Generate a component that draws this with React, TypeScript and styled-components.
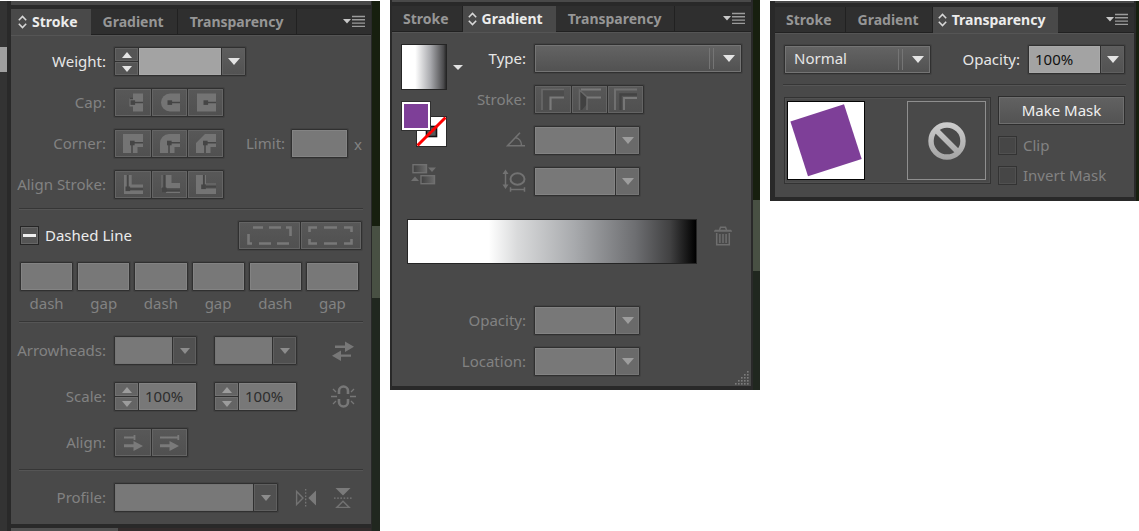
import React from "react";
import styled, { createGlobalStyle, css } from "styled-components";

const Global = createGlobalStyle`
  *, *::before, *::after { box-sizing: border-box; }
  body { margin: 0; background: #fff; font-family: "Noto Sans", "Open Sans", sans-serif; font-size: 15px; line-height: 18px; color: #e2e2e2; }
  button, input, select { font: inherit; color: inherit; margin: 0; padding: 0; border: 0; border-radius: 0; background: none; }
  svg { display: block; flex: none; }
`;

const DARK = "#292929";
const BODY = "#494949";
const EDGE = "#303030";
const MUTED = "#828282";

/* ---------- page and window frames ---------- */

const Page = styled.main`
  display: flex;
  align-items: flex-start;
  gap: 10px;
`;

const Frame = styled.section<{ $basis: number; $top: number }>`
  flex: 1 0 ${(p) => p.$basis}px;
  display: flex;
  margin-top: ${(p) => p.$top}px;
`;

const Rail = styled.div`
  flex: none;
  width: 7px;
  background: linear-gradient(#333 46px, #a0a0a0 46px 71px, #333 71px);
`;

const Shell = styled.div<{ $left: number; $right: number }>`
  flex: 1;
  display: flex;
  flex-direction: column;
  padding: 0 ${(p) => p.$right}px 0 ${(p) => p.$left}px;
  background: ${DARK};
`;

const Backdrop = styled.div<{ $width: number; $from: number; $to: number }>`
  flex: none;
  width: ${(p) => p.$width}px;
  background: linear-gradient(#171f0f ${(p) => p.$from}px, #485043 ${(p) => p.$from}px ${(p) => p.$to}px, #20271f ${(p) => p.$to}px);
`;

const DockEdge = styled.div<{ $height: number }>`
  height: ${(p) => p.$height}px;
  margin-bottom: 4px;
  background: ${BODY};
`;

const NextDock = styled.div`
  height: 3px;
  margin-top: 4px;
  background: linear-gradient(90deg, #505050 107px, #332c2c 107px);
`;

const TabBar = styled.div`
  display: flex;
  height: 26px;
  background: #2f2f2f;
`;

const TabButton = styled.button<{ $active: boolean }>`
  display: flex;
  align-items: center;
  gap: 5px;
  height: 26px;
  padding: 0 13px 0 12px;
  border-right: 1px solid #212121;
  border-bottom: 1px solid #212121;
  font-size: 14px;
  font-weight: 700;
  color: #969696;
  &:first-child { padding-left: 11px; }
  ${(p) =>
    p.$active &&
    css`
      padding: 0 12px 0 5px;
      &:first-child { padding-left: 7px; }
      background: ${BODY};
      border-color: ${BODY};
      color: #ececec;
    `}
`;

const TabRest = styled.div`
  flex: 1;
  display: flex;
  justify-content: flex-end;
  align-items: center;
  padding-right: 6px;
  border-bottom: 1px solid #212121;
`;

const MenuButton = styled.button`
  display: flex;
`;

const Body = styled.div<{ $bottom: number }>`
  padding: 12px 8px ${(p) => p.$bottom}px;
  background: ${BODY};
  box-shadow: inset 0 1px #555;
`;

/* ---------- generic parts ---------- */

const Stack = styled.div<{ $gap: number }>`
  display: flex;
  flex-direction: column;
  gap: ${(p) => p.$gap}px;
`;

const Row = styled.div<{ $label: number }>`
  display: grid;
  grid-template-columns: ${(p) => p.$label}px 1fr;
  column-gap: 8px;
  align-items: center;
  height: 29px;
`;

const Controls = styled.div`
  display: flex;
  align-items: center;
`;

const Caption = styled.label<{ $bright?: boolean }>`
  display: flex;
  justify-content: flex-end;
  padding-bottom: 2px;
  white-space: nowrap;
  color: ${(p) => (p.$bright ? "#e6e6e6" : MUTED)};
`;

const Rule = styled.hr<{ $above: number; $below: number }>`
  height: 2px;
  margin: ${(p) => p.$above}px 0 ${(p) => p.$below}px;
  border: 0;
  border-top: 1px solid #363636;
  background: #555;
`;

const Box = styled.div<{ $width?: number }>`
  display: flex;
  flex: ${(p) => (p.$width ? "none" : "1")};
  width: ${(p) => (p.$width ? `${p.$width}px` : "auto")};
  height: 29px;
  border: 1px solid ${EDGE};
  border-radius: 1px;
  box-shadow: 0 0 0 1px #424242;
`;

const Field = styled.input<{ $bright?: boolean }>`
  flex: 1;
  min-width: 0;
  width: 100%;
  padding: 0 0 1px 6px;
  background: ${(p) => (p.$bright ? "#a3a3a3" : "#787878")};
  color: ${(p) => (p.$bright ? "#111" : "#2d2d2d")};
  box-shadow: inset 0 0 0 1px ${(p) => (p.$bright ? "#a9a9a9" : "#838383")};
`;

const ArrowCell = styled.button<{ $tone: "bright" | "mid" | "dim" }>`
  display: flex;
  flex: none;
  align-items: center;
  justify-content: center;
  width: 24px;
  border-left: 1px solid ${EDGE};
  box-shadow: inset 0 0 0 1px ${(p) => (p.$tone === "mid" ? "#757575" : "#5f5f5f")};
  background: ${(p) =>
    p.$tone === "bright" ? "linear-gradient(#5e5e5e, #525252)" : p.$tone === "mid" ? "#6a6a6a" : "#505050"};
  color: ${(p) => (p.$tone === "bright" ? "#e4e4e4" : p.$tone === "mid" ? "#9d9d9d" : "#8c8c8c")};
`;

const SpinColumn = styled.div`
  display: flex;
  flex: none;
  flex-direction: column;
  width: 24px;
  border-right: 1px solid ${EDGE};
`;

const SpinButton = styled.button<{ $bright?: boolean }>`
  flex: 1;
  display: flex;
  align-items: center;
  justify-content: center;
  background: ${(p) => (p.$bright ? "#555" : "#646464")};
  color: ${(p) => (p.$bright ? "#e4e4e4" : "#9c9c9c")};
  box-shadow: inset 0 0 0 1px ${(p) => (p.$bright ? "#636363" : "#707070")};
  & + & { border-top: 1px solid ${EDGE}; }
`;

const SelectBox = styled(Box)<{ $flat?: boolean }>`
  display: grid;
  grid-template-columns: 1fr 24px;
  background: ${(p) => (p.$flat ? "#787878" : "linear-gradient(#646464, #515151)")};
`;

const SelectInput = styled.select`
  appearance: none;
  grid-area: 1 / 1 / 2 / 3;
  width: 100%;
  padding: 0 32px 3px 9px;
  color: #e6e6e6;
  box-shadow: inset 0 0 0 1px #747474;
`;

const SelectArrow = styled.span<{ $dim?: boolean }>`
  grid-area: 1 / 2;
  display: flex;
  align-items: center;
  justify-content: center;
  pointer-events: none;
  color: ${(p) => (p.$dim ? "#8c8c8c" : "#e4e4e4")};
  ${(p) =>
    p.$dim &&
    css`
      background: #505050;
      border-left: 1px solid ${EDGE};
      box-shadow: inset 0 0 0 1px #5f5f5f;
    `}
`;

const SelectGroove = styled.span`
  grid-area: 1 / 1;
  justify-self: end;
  align-self: center;
  width: 5px;
  height: 21px;
  margin-right: 3px;
  border: solid #757575;
  border-width: 0 1px;
  pointer-events: none;
`;

const ToolGroup = styled(Box)`
  width: max-content;
  flex: none;
`;

const ToolButton = styled.button<{ $wide?: boolean }>`
  display: flex;
  align-items: center;
  justify-content: center;
  width: ${(p) => (p.$wide ? 61 : 36)}px;
  background: linear-gradient(#585858, #505050);
  box-shadow: inset 0 0 0 1px #646464;
  & + & { border-left: 1px solid ${EDGE}; }
`;

const PlainButton = styled.button`
  display: flex;
  align-items: center;
  justify-content: center;
`;

/* ---------- stroke panel ---------- */

const StrokeBody = styled(Body)`
  label { flex: none; }
`;

const LimitGroup = styled.div`
  display: flex;
  align-items: center;
  gap: 6px;
  margin-left: 22px;
  color: ${MUTED};
`;

const DashHeader = styled.div`
  display: flex;
  align-items: center;
  justify-content: space-between;
  height: 29px;
  padding: 0 1px;
  margin-bottom: 12px;
`;

const CheckLabel = styled.label<{ $bright?: boolean }>`
  display: flex;
  align-items: center;
  gap: 6px;
  line-height: 17px;
  color: ${(p) => (p.$bright ? "#ececec" : MUTED)};
`;

const CheckInput = styled.input`
  appearance: none;
  width: 19px;
  height: 19px;
  border: 1px solid #333;
  background: #464646;
  box-shadow: inset 0 0 0 1px #505050;
  &.mixed {
    border-color: #262626;
    background: linear-gradient(#efefef, #efefef) center / 13px 3px no-repeat, #555;
    box-shadow: inset 0 0 0 1px #666;
  }
`;

const DashGrid = styled.div`
  display: grid;
  grid-template-columns: repeat(6, 1fr);
  gap: 4px;
  padding: 0 4px 0 1px;
`;

const DashCell = styled.label`
  display: flex;
  flex-direction: column;
  align-items: center;
  gap: 3px;
  color: ${MUTED};
`;

const DashBox = styled(Box)`
  flex: none;
  width: 100%;
`;

const PairSpace = styled.div`
  flex: none;
  width: 17px;
`;

const RowIcon = styled(PlainButton)`
  width: 26px;
  margin-left: auto;
  margin-right: 7px;
`;

const ProfileFlip = styled(PlainButton)`
  margin-left: 17px;
`;

/* ---------- gradient panel ---------- */

const GradientTop = styled.div`
  display: grid;
  grid-template-columns: 63px 1fr;
  padding-left: 1px;
  padding-right: 1px;
`;

const SwatchColumn = styled.div`
  display: flex;
  flex-direction: column;
`;

const PreviewRow = styled.div`
  display: flex;
  align-items: center;
  gap: 6px;
`;

const Preview = styled.div`
  width: 46px;
  height: 46px;
  border: 1px solid #252525;
  background: linear-gradient(90deg, #fff 30%, #a8a9ad 65%, #4c4c4e 94%, #2a2a2a);
`;

const Proxies = styled.div`
  position: relative;
  width: 46px;
  height: 46px;
  margin-top: 11px;
`;

const FillProxy = styled.button`
  position: absolute;
  top: 0;
  left: 0;
  width: 30px;
  height: 30px;
  border: 1px solid #303030;
  background: #7e3f98;
  box-shadow: inset 0 0 0 2px #fff;
`;

const StrokeProxy = styled.button`
  position: absolute;
  right: 0;
  bottom: 0;
`;

const ReverseButton = styled(PlainButton)`
  margin: 16px 0 0 10px;
  align-self: flex-start;
`;

const RampRow = styled.div`
  display: flex;
  align-items: flex-start;
  justify-content: space-between;
  gap: 17px;
  margin: 23px 11px 42px 7px;
`;

const Ramp = styled.div`
  flex: 1;
  height: 45px;
  border: 1px solid #252525;
  background: linear-gradient(90deg, #fff 28%, #d9dadb 38%, #a7a9ac 58%, #6d6e71 79%, #414142 91%, #000);
`;

const TrashButton = styled(PlainButton)`
  margin-top: 7px;
`;

const GripHolder = styled.div`
  display: flex;
  justify-content: flex-end;
  height: 10px;
  margin-right: -6px;
  overflow: visible;
  align-items: flex-end;
`;

/* ---------- transparency panel ---------- */

const BlendRow = styled.div`
  display: flex;
  align-items: center;
  justify-content: space-between;
  padding: 0 1px;
`;

const OpacityGroup = styled.div`
  display: flex;
  align-items: center;
  gap: 8px;
`;

const MaskRow = styled.div`
  display: flex;
  gap: 7px;
  padding: 0 1px;
`;

const MaskWell = styled.div`
  flex: 1;
  display: flex;
  justify-content: space-between;
  align-items: center;
  height: 87px;
  margin-top: 1px;
  padding: 0 4px 0 2px;
  border: 1px solid #333;
  box-shadow: inset 0 0 0 1px #515151;
`;

const Artwork = styled.div`
  border: 1px solid #050505;
  background: #fff;
`;

const EmptyMask = styled.div`
  display: flex;
  align-items: center;
  justify-content: center;
  width: 79px;
  height: 79px;
  border: 1px solid #8f8f8f;
`;

const MaskOptions = styled.div`
  display: flex;
  flex-direction: column;
  width: 127px;
  gap: 11px;
`;

const MakeMask = styled.button`
  height: 29px;
  padding-bottom: 1px;
  border: 1px solid #2d2d2d;
  background: linear-gradient(#626262, #525252);
  box-shadow: inset 0 0 0 1px #6e6e6e;
  color: #efefef;
`;

/* ---------- drawings ---------- */

const Down = ({ w = 12, h = 7 }: { w?: number; h?: number }) => (
  <svg width={w} height={h} viewBox="0 0 12 7" preserveAspectRatio="none" aria-hidden="true">
    <path d="M0 0H12L6 7Z" fill="currentColor" />
  </svg>
);

const Up = () => (
  <svg width="10" height="6" viewBox="0 0 10 6" aria-hidden="true">
    <path d="M0 6H10L5 0Z" fill="currentColor" />
  </svg>
);

const Cycle = () => (
  <svg width="9" height="14" viewBox="0 0 9 14" fill="none" stroke="#d8d8d8" strokeWidth="1.5" aria-hidden="true">
    <path d="M.8 5.3 4.5 1.4 8.2 5.3M.8 8.7l3.7 3.9 3.7-3.9" />
  </svg>
);

const MenuIcon = () => (
  <svg width="22" height="13" viewBox="0 0 22 13" aria-hidden="true">
    <path d="M0 4H8L4 8.5Z" fill="#c8c8c8" />
    <path d="M9 1.5H22M9 4.8H22M9 8.1H22M9 11.4H22" stroke="#9c9c9c" strokeWidth="1.4" />
  </svg>
);

const LIGHT = "#747474";
const INK = "#454545";
const DIM = "#727272";

const Glyph = ({ light, lines, node }: { light: string; lines: string; node: [number, number] }) => (
  <svg width="24" height="21" viewBox="0 0 24 21" aria-hidden="true">
    <path d={light} fill={LIGHT} />
    <path d={lines} stroke={INK} strokeWidth="1.5" fill="none" />
    <rect x={node[0]} y={node[1]} width="4.6" height="4.6" fill={INK} />
  </svg>
);

const CAPS = [
  { name: "Butt cap", light: "M12 1.5H22V19.5H12V14.5H8.5V6.5H12Z", lines: "M9 6.5H12M13 10.5H22", node: [9.5, 8.3] },
  { name: "Round cap", light: "M22 1.5V19.5H12A9 9 0 0 1 12 1.5Z", lines: "M12 10.5H22", node: [9.5, 8.3] },
  { name: "Projecting cap", light: "M3 1.5H22V19.5H3Z", lines: "M12 10.5H22", node: [9.5, 8.3] },
] as const;

const CORNERS = [
  { name: "Miter join", light: "M2 1H22V14H16.5V20H2Z", lines: "M11 9.7H22M11 9.7V20", node: [9, 7.7] },
  { name: "Round join", light: "M11 1H22V14H16.5V20H2V10A9 9 0 0 1 11 1Z", lines: "M11 9.7H22M11 9.7V20", node: [9, 7.7] },
  { name: "Bevel join", light: "M11 1H22V14H16.5V20H2V10Z", lines: "M11 9.7H22M11 9.7V20", node: [9, 7.7] },
] as const;

const ALIGNS = [
  {
    name: "Center",
    light: "M3 1H5.7V20H3ZM7.7 1H10.7V10.5H22V13.5H7.7ZM8 16.5H22V20H3V16.5Z",
    lines: "M6.7 1V14M8 15H22",
    node: [4.5, 12.5],
  },
  {
    name: "Inside",
    light: "M8 1H13.5V9H22V14H8ZM3.5 1H4.5V14H3.5ZM8 18H22V19H8Z",
    lines: "M6.3 1V15M8 16.3H22",
    node: [4, 13.5],
  },
  {
    name: "Outside",
    light: "M2 1H9V14.5H22V20H2ZM11 1H12V9.5H22V10.5H11Z",
    lines: "M9.7 1V11M12 12.8H22",
    node: [7.2, 10.5],
  },
] as const;

type GlyphSpec = { name: string; light: string; lines: string; node: readonly [number, number] };

const GlyphGroup = ({ items, label }: { items: readonly GlyphSpec[]; label: string }) => (
  <ToolGroup role="group" aria-label={label}>
    {items.map((g) => (
      <ToolButton key={g.name} type="button" aria-label={g.name}>
        <Glyph light={g.light} lines={g.lines} node={[g.node[0], g.node[1]]} />
      </ToolButton>
    ))}
  </ToolGroup>
);

const DashIcon = ({ aligned }: { aligned?: boolean }) => (
  <svg width="46" height="21" viewBox="0 0 46 21" fill="none" stroke="#787878" strokeWidth="2.6" aria-hidden="true">
    {aligned ? (
      <path d="M1.5 7V2.5H9M16 2.5H29M36 2.5H43.5V7M1.5 14V18.5H9M16 18.5H29M36 18.5H43.5V14" />
    ) : (
      <path d="M1.5 17V9M6 2.5H16M22 2.5H34M39 2.5H43.5V11M1.5 14V18.5H5M12 18.5H24M30 18.5H42" />
    )}
  </svg>
);

const SwapIcon = () => (
  <svg width="22" height="20" viewBox="0 0 22 20" fill="#777" aria-hidden="true">
    <path d="M3 4.6H13V.5L22 5.8 13 11V7H3ZM19 13.4H9V9.5L0 14.8 9 20V15.8H19Z" />
  </svg>
);

const LinkIcon = () => (
  <svg width="25" height="23" viewBox="0 0 25 23" fill="none" stroke="#777" aria-hidden="true">
    <path d="M8 9V6A4.5 4.5 0 0 1 17 6V9M8 14V17A4.5 4.5 0 0 0 17 17V14" strokeWidth="2.6" />
    <path d="M0 11.5H6M19 11.5H25M2 4 5 7M23 4 20 7M2 19 5 16M23 19 20 16" strokeWidth="1.3" />
  </svg>
);

const TipIcon = ({ beyond }: { beyond?: boolean }) => (
  <svg width="21" height="17" viewBox="0 0 21 17" aria-hidden="true">
    <path d={beyond ? "M1 3.5H20M19.3 1V6" : "M1 3.5H12M11.5 1V6"} stroke="#7a7a7a" strokeWidth="1.8" />
    <path d="M1 10.3H10.5V7L20 12 10.5 17V13.3H1Z" fill="#7a7a7a" />
  </svg>
);

const FlipAlong = () => (
  <svg width="22" height="18" viewBox="0 0 22 18" aria-hidden="true">
    <path d="M1.6 2.5V15.5L8 9Z" fill="none" stroke={DIM} strokeWidth="1.4" />
    <path d="M21 1.5V16.5L13.3 9Z" fill="#7a7a7a" />
    <path d="M10.7 0V18" stroke="#7a7a7a" strokeWidth="1.2" strokeDasharray="1.6 1.6" />
  </svg>
);

const FlipAcross = () => (
  <svg width="18" height="22" viewBox="0 0 18 22" aria-hidden="true">
    <path d="M1.5 1H16.5L9 8.5Z" fill="#7a7a7a" />
    <path d="M2.8 20.4H15.2L9 14.2Z" fill="none" stroke={DIM} strokeWidth="1.4" />
    <path d="M0 11.2H18" stroke="#7a7a7a" strokeWidth="1.2" strokeDasharray="1.6 1.6" />
  </svg>
);

const NoneIcon = () => (
  <svg width="31" height="31" viewBox="0 0 31 31" aria-hidden="true">
    <rect x=".5" y=".5" width="30" height="30" fill="#fff" stroke="#2a2a2a" />
    <rect x="10.5" y="10.5" width="10" height="10" fill="#565656" stroke="#111" strokeWidth="1.6" />
    <path d="M1.5 29.5 29.5 1.5" stroke="#f00" strokeWidth="3" />
  </svg>
);

const STROKE_GRADIENTS = ["Within stroke", "Along stroke", "Across stroke"];

const StrokeGradientIcon = ({ index }: { index: number }) => (
  <svg width="26" height="23" viewBox="0 0 26 23" fill="none" aria-hidden="true">
    {index === 0 && (
      <>
        <path d="M2 22V1.5H24V9H10V22Z" fill="#4d4d4d" />
        <path d="M2 22V1.5H24" stroke="#696969" strokeWidth="1.6" />
        <path d="M10.5 22V9.5H24" stroke="#7a7a7a" strokeWidth="2.2" />
      </>
    )}
    {index === 1 && (
      <>
        <path d="M3 2 10 9V16L5 22H3Z" fill="#414141" />
        <path d="M2.5 22V2L10 9V22" stroke="#696969" strokeWidth="1.6" />
        <path d="M4 1.5H24M10 9.5H24" stroke="#7a7a7a" strokeWidth="2" />
      </>
    )}
    {index === 2 && (
      <>
        <path d="M7.5 22V6.5H24" stroke="#434343" strokeWidth="2.4" />
        <path d="M2 22V1.5H24" stroke="#707070" strokeWidth="2" />
        <path d="M11 22V10H24" stroke="#7a7a7a" strokeWidth="1.8" />
      </>
    )}
  </svg>
);

const ReverseIcon = () => (
  <svg width="26" height="22" viewBox="0 0 26 22" aria-hidden="true">
    <defs>
      <linearGradient id="fadeOut">
        <stop stopColor="#404040" />
        <stop offset="1" stopColor="#6c6c6c" />
      </linearGradient>
    </defs>
    <g fill="url(#fadeOut)" stroke="#707070" strokeWidth="1.4">
      <rect x="2" y="1.7" width="13.5" height="8" />
      <rect x="10" y="12.7" width="13.5" height="8" />
    </g>
    <path d="M17 4.5H25L21 9ZM0 18H8L4 13.5Z" fill="#707070" />
  </svg>
);

const AngleIcon = () => (
  <svg width="20" height="15" viewBox="0 0 20 15" fill="none" stroke={DIM} strokeWidth="1.6" aria-hidden="true">
    <path d="M14 .8 1.6 13.8H19M9 5.5C13 6 15.5 9.5 15.5 13.5" />
  </svg>
);

const AspectIcon = () => (
  <svg width="24" height="23" viewBox="0 0 24 23" fill="none" stroke={DIM} aria-hidden="true">
    <ellipse cx="15.5" cy="10" rx="7" ry="5.7" strokeWidth="2" />
    <path d="M3.5 3V17M8 20.5H23M8.5 18.2V22.8M22.5 18.2V22.8" strokeWidth="1.5" />
    <path d="M.5 5 3.5 .5 6.5 5ZM.5 15.5 3.5 20 6.5 15.5Z" fill={DIM} stroke="none" />
  </svg>
);

const TrashIcon = () => (
  <svg width="18" height="20" viewBox="0 0 18 20" fill="none" stroke="#6e6e6e" strokeWidth="1.5" aria-hidden="true">
    <path d="M5.5 4 6.5 1.2H11.5L12.5 4" />
    <path d="M0 5.5H18L17 4H1Z" fill="#6e6e6e" strokeWidth=".5" />
    <path d="M2.7 7V18.8H15.3V7M5.9 8V17M9 8V17M12.1 8V17" />
  </svg>
);

const GripIcon = () => (
  <svg width="16" height="17" viewBox="0 0 16 17" aria-hidden="true">
    {[0, 1, 2, 3, 4].flatMap((r) =>
      Array.from({ length: r + 1 }, (_, c) => (
        <rect key={`${r}-${c}`} x={14 - c * 3} y={2 + r * 3} width="1.6" height="1.6" fill="#7c7c7c" />
      ))
    )}
  </svg>
);

const ArtworkIcon = () => (
  <svg width="76" height="77" viewBox="0 0 76 77" role="img" aria-label="Artwork thumbnail">
    <path d="M2.4 19.6 56 2.3 73.7 56.9 20 74.3Z" fill="#7e3f98" />
  </svg>
);

const ForbidIcon = () => (
  <svg width="40" height="40" viewBox="0 0 40 40" fill="none" stroke="url(#steel)" strokeWidth="5.4" aria-hidden="true">
    <defs>
      <linearGradient id="steel" x1="0" y1="0" x2="0" y2="40" gradientUnits="userSpaceOnUse">
        <stop stopColor="#cfcfcf" />
        <stop offset="1" stopColor="#a2a2a2" />
      </linearGradient>
    </defs>
    <circle cx="20" cy="20" r="16" />
    <path d="M9 9 31 31" />
  </svg>
);

/* ---------- composed controls ---------- */

const TABS = ["Stroke", "Gradient", "Transparency"];

const Tabs = ({ active }: { active: string }) => (
  <TabBar role="tablist">
    {TABS.map((t) => (
      <TabButton key={t} type="button" role="tab" aria-selected={t === active} $active={t === active}>
        {t === active && <Cycle />}
        {t}
      </TabButton>
    ))}
    <TabRest>
      <MenuButton type="button" aria-label="Panel menu">
        <MenuIcon />
      </MenuButton>
    </TabRest>
  </TabBar>
);

const Combo = ({ id, width, tone = "mid", value }: { id: string; width: number; tone?: "bright" | "mid"; value?: string }) => (
  <Box $width={width}>
    <Field id={id} $bright={tone === "bright"} defaultValue={value} />
    <ArrowCell type="button" $tone={tone} aria-label="Show values">
      <Down />
    </ArrowCell>
  </Box>
);

const Spinner = ({ bright }: { bright?: boolean }) => (
  <SpinColumn>
    <SpinButton type="button" $bright={bright} aria-label="Increase">
      <Up />
    </SpinButton>
    <SpinButton type="button" $bright={bright} aria-label="Decrease">
      <Down w={10} h={6} />
    </SpinButton>
  </SpinColumn>
);

const FlatSelect = ({ id, label, width }: { id: string; label?: string; width: number }) => (
  <SelectBox $width={width} $flat>
    <SelectInput id={id} aria-label={label}>
      <option />
    </SelectInput>
    <SelectArrow $dim>
      <Down w={10} h={6} />
    </SelectArrow>
  </SelectBox>
);

const StrokePanel = () => (
  <Frame $basis={380} $top={1} aria-label="Stroke panel">
    <Rail />
    <Shell $left={4} $right={1}>
      <DockEdge $height={4} />
      <Tabs active="Stroke" />
      <StrokeBody $bottom={12}>
        <Stack $gap={12}>
          <Row $label={87}>
            <Caption $bright htmlFor="weight">Weight:</Caption>
            <Controls>
              <Box $width={132}>
                <Spinner bright />
                <Field id="weight" $bright />
                <ArrowCell type="button" $tone="bright" aria-label="Weight presets">
                  <Down />
                </ArrowCell>
              </Box>
            </Controls>
          </Row>
          <Row $label={87}>
            <Caption as="span">Cap:</Caption>
            <GlyphGroup items={CAPS} label="Cap" />
          </Row>
          <Row $label={87}>
            <Caption as="span">Corner:</Caption>
            <Controls>
              <GlyphGroup items={CORNERS} label="Corner" />
              <LimitGroup>
                <Caption htmlFor="limit">Limit:</Caption>
                <Box $width={57}>
                  <Field id="limit" />
                </Box>
                <span>x</span>
              </LimitGroup>
            </Controls>
          </Row>
          <Row $label={87}>
            <Caption as="span">Align Stroke:</Caption>
            <GlyphGroup items={ALIGNS} label="Align stroke" />
          </Row>
        </Stack>
        <Rule $above={9} $below={11} />
        <DashHeader>
          <CheckLabel $bright>
            <CheckInput type="checkbox" className="mixed" />
            Dashed Line
          </CheckLabel>
          <ToolGroup role="group" aria-label="Dash alignment">
            <ToolButton $wide type="button" aria-label="Preserve exact dash lengths">
              <DashIcon />
            </ToolButton>
            <ToolButton $wide type="button" aria-label="Align dashes to corners">
              <DashIcon aligned />
            </ToolButton>
          </ToolGroup>
        </DashHeader>
        <DashGrid>
          {["dash", "gap", "dash", "gap", "dash", "gap"].map((t, i) => (
            <DashCell key={i}>
              <DashBox>
                <Field />
              </DashBox>
              {t}
            </DashCell>
          ))}
        </DashGrid>
        <Rule $above={9} $below={13} />
        <Stack $gap={17}>
          <Row $label={87}>
            <Caption htmlFor="arrow-start">Arrowheads:</Caption>
            <Controls>
              <FlatSelect id="arrow-start" width={83} />
              <PairSpace />
              <FlatSelect id="arrow-end" label="End arrowhead" width={83} />
              <RowIcon type="button" aria-label="Swap arrowheads">
                <SwapIcon />
              </RowIcon>
            </Controls>
          </Row>
          <Row $label={87}>
            <Caption htmlFor="scale-start">Scale:</Caption>
            <Controls>
              <Box $width={83}>
                <Spinner />
                <Field id="scale-start" defaultValue="100%" />
              </Box>
              <PairSpace />
              <Box $width={83}>
                <Spinner />
                <Field aria-label="End scale" defaultValue="100%" />
              </Box>
              <RowIcon type="button" aria-label="Link scales">
                <LinkIcon />
              </RowIcon>
            </Controls>
          </Row>
          <Row $label={87}>
            <Caption as="span">Align:</Caption>
            <ToolGroup role="group" aria-label="Arrow alignment">
              <ToolButton type="button" aria-label="Extend tip beyond path">
                <TipIcon />
              </ToolButton>
              <ToolButton type="button" aria-label="Place tip at end of path">
                <TipIcon beyond />
              </ToolButton>
            </ToolGroup>
          </Row>
        </Stack>
        <Rule $above={12} $below={12} />
        <Row $label={87}>
          <Caption htmlFor="profile">Profile:</Caption>
          <Controls>
            <FlatSelect id="profile" width={164} />
            <ProfileFlip type="button" aria-label="Flip along">
              <FlipAlong />
            </ProfileFlip>
            <RowIcon type="button" aria-label="Flip across">
              <FlipAcross />
            </RowIcon>
          </Controls>
        </Row>
      </StrokeBody>
      <NextDock />
    </Shell>
    <Backdrop $width={8} $from={225} $to={297} />
  </Frame>
);

const GradientPanel = () => (
  <Frame $basis={370} $top={0} aria-label="Gradient panel">
    <Shell $left={2} $right={2}>
      <DockEdge $height={2} />
      <Tabs active="Gradient" />
      <Body $bottom={0}>
        <GradientTop>
          <SwatchColumn>
            <PreviewRow>
              <Preview />
              <PlainButton type="button" aria-label="Gradient presets">
                <Down w={10} h={5} />
              </PlainButton>
            </PreviewRow>
            <Proxies>
              <StrokeProxy type="button" aria-label="Stroke: none">
                <NoneIcon />
              </StrokeProxy>
              <FillProxy type="button" aria-label="Fill" />
            </Proxies>
            <ReverseButton type="button" aria-label="Reverse gradient">
              <ReverseIcon />
            </ReverseButton>
          </SwatchColumn>
          <Stack $gap={12}>
            <Row $label={62}>
              <Caption $bright htmlFor="type">Type:</Caption>
              <SelectBox>
                <SelectInput id="type">
                  <option />
                </SelectInput>
                <SelectGroove />
                <SelectArrow>
                  <Down />
                </SelectArrow>
              </SelectBox>
            </Row>
            <Row $label={62}>
              <Caption as="span">Stroke:</Caption>
              <ToolGroup role="group" aria-label="Stroke gradient">
                {STROKE_GRADIENTS.map((name, i) => (
                  <ToolButton key={name} type="button" aria-label={name}>
                    <StrokeGradientIcon index={i} />
                  </ToolButton>
                ))}
              </ToolGroup>
            </Row>
            <Row $label={62}>
              <Caption htmlFor="angle" aria-label="Angle">
                <AngleIcon />
              </Caption>
              <Combo id="angle" width={106} />
            </Row>
            <Row $label={62}>
              <Caption htmlFor="aspect" aria-label="Aspect ratio">
                <AspectIcon />
              </Caption>
              <Combo id="aspect" width={106} />
            </Row>
          </Stack>
        </GradientTop>
        <RampRow>
          <Ramp role="img" aria-label="Gradient ramp" />
          <TrashButton type="button" aria-label="Delete stop">
            <TrashIcon />
          </TrashButton>
        </RampRow>
        <Stack $gap={12}>
          <Row $label={126}>
            <Caption htmlFor="stop-opacity">Opacity:</Caption>
            <Combo id="stop-opacity" width={106} />
          </Row>
          <Row $label={126}>
            <Caption htmlFor="location">Location:</Caption>
            <Combo id="location" width={106} />
          </Row>
        </Stack>
        <GripHolder>
          <GripIcon />
        </GripHolder>
      </Body>
      <DockEdge $height={0} />
    </Shell>
    <Backdrop $width={7} $from={200} $to={271} />
  </Frame>
);

const TransparencyPanel = () => (
  <Frame $basis={369} $top={1} aria-label="Transparency panel">
    <Shell $left={5} $right={2}>
      <DockEdge $height={2} />
      <Tabs active="Transparency" />
      <Body $bottom={12}>
        <BlendRow>
          <SelectBox $width={147}>
            <SelectInput aria-label="Blend mode" defaultValue="Normal">
              <option>Normal</option>
            </SelectInput>
            <SelectGroove />
            <SelectArrow>
              <Down />
            </SelectArrow>
          </SelectBox>
          <OpacityGroup>
            <Caption $bright htmlFor="opacity">Opacity:</Caption>
            <Combo id="opacity" width={97} tone="bright" value="100%" />
          </OpacityGroup>
        </BlendRow>
        <Rule $above={10} $below={10} />
        <MaskRow>
          <MaskWell>
            <Artwork>
              <ArtworkIcon />
            </Artwork>
            <EmptyMask>
              <ForbidIcon />
            </EmptyMask>
          </MaskWell>
          <MaskOptions>
            <MakeMask type="button">Make Mask</MakeMask>
            <CheckLabel>
              <CheckInput type="checkbox" />
              Clip
            </CheckLabel>
            <CheckLabel>
              <CheckInput type="checkbox" />
              Invert Mask
            </CheckLabel>
          </MaskOptions>
        </MaskRow>
      </Body>
      <DockEdge $height={0} />
    </Shell>
    <Backdrop $width={3} $from={400} $to={400} />
  </Frame>
);

export default function App() {
  return (
    <>
      <Global />
      <Page>
        <StrokePanel />
        <GradientPanel />
        <TransparencyPanel />
      </Page>
    </>
  );
}
